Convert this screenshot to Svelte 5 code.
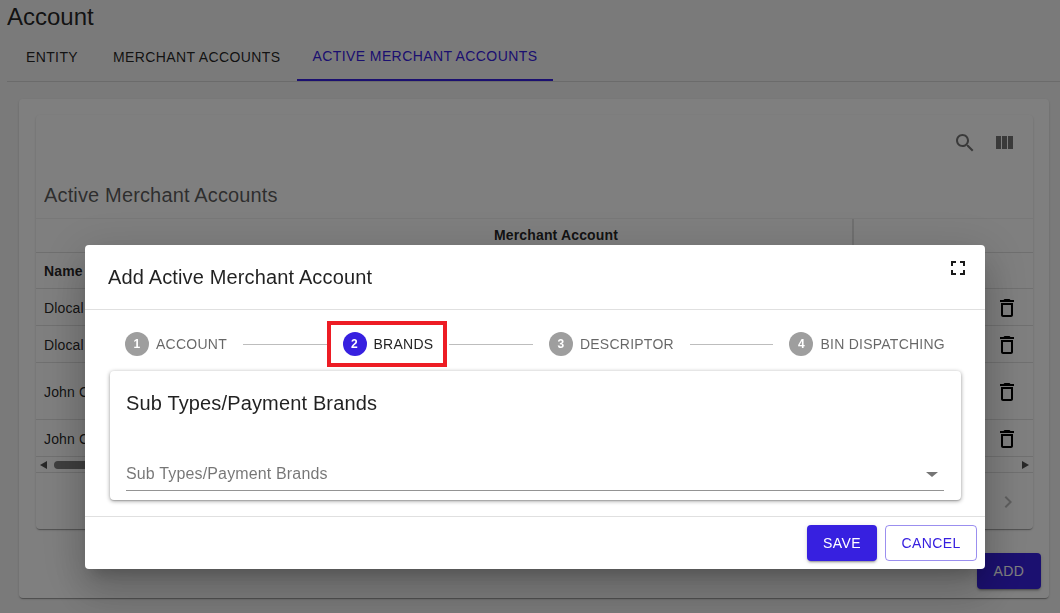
<script>
  const tabs = ['Entity', 'Merchant Accounts', 'Active Merchant Accounts']
  const rows = [
    { name: 'Dlocal', tall: false },
    { name: 'Dlocal', tall: false },
    { name: 'John C', tall: true },
    { name: 'John C', tall: false }
  ]
  const steps = ['Account', 'Brands', 'Descriptor', 'BIN Dispatching']
  let active = 1
</script>

<main>
  <h1>Account</h1>
  <nav class="tabs">
    {#each tabs as tab, i}
      <button class="tab" class:selected={i === 2}>{tab}</button>
    {/each}
  </nav>

  <section class="outer">
    <div class="inner">
      <div class="toolbar">
        <svg viewBox="0 0 24 24"><path d="M15.5 14h-.79l-.28-.27C15.41 12.59 16 11.11 16 9.5 16 5.91 13.09 3 9.5 3S3 5.91 3 9.5 5.91 16 9.5 16c1.61 0 3.09-.59 4.23-1.57l.27.28v.79l5 4.99L20.49 19l-4.99-5zm-6 0C7.01 14 5 11.99 5 9.5S7.01 5 9.5 5 14 7.01 14 9.5 11.99 14 9.5 14z" /></svg>
        <svg viewBox="0 0 24 24"><path d="M10 18h5V5h-5v13zm-6 0h5V5H4v13zM16 5v13h5V5h-5z" /></svg>
      </div>
      <h2>Active Merchant Accounts</h2>

      <div class="group-head">
        <div class="group-cell">Merchant Account</div>
      </div>
      <div class="row head"><span>Name</span></div>
      {#each rows as row}
        <div class="row" class:tall={row.tall}>
          <span>{row.name}</span>
          <svg class="trash" viewBox="0 0 24 24"><path d="M6 19c0 1.1.9 2 2 2h8c1.1 0 2-.9 2-2V7H6v12zM8 9h8v10H8V9zm7.5-5l-1-1h-5l-1 1H5v2h14V4z" /></svg>
        </div>
      {/each}
      <div class="scrollbar">
        <i class="arrow left"></i>
        <div class="track"><div class="thumb"></div></div>
        <i class="arrow right"></i>
      </div>
      <div class="pager">
        <svg viewBox="0 0 24 24"><path d="M10 6L8.59 7.41 13.17 12l-4.58 4.59L10 18l6-6z" /></svg>
      </div>
    </div>
    <div class="add-row"><button class="add">Add</button></div>
  </section>
</main>

<div class="backdrop">
  <div class="dialog">
    <header>
      <h3>Add Active Merchant Account</h3>
      <svg class="fullscreen" viewBox="0 0 24 24"><path d="M7 14H5v5h5v-2H7v-3zm-2-4h2V7h3V5H5v5zm12 7h-3v2h5v-5h-2v3zM14 5v2h3v3h2V5h-5z" /></svg>
    </header>

    <div class="content">
      <div class="stepper">
        {#each steps as step, i}
          {#if i > 0}<div class="connector"></div>{/if}
          <div class="step" class:current={i === active}>
            <span class="num">{i + 1}</span>
            <span class="label">{step}</span>
          </div>
        {/each}
      </div>

      <div class="panel">
        <h4>Sub Types/Payment Brands</h4>
        <div class="select">
          <span>Sub Types/Payment Brands</span>
          <i class="caret"></i>
        </div>
      </div>
    </div>

    <footer>
      <button class="save">Save</button>
      <button class="cancel">Cancel</button>
    </footer>
  </div>
</div>

<style>
  :global(body) {
    margin: 0;
    background: #f5f5f5;
    font-family: 'Liberation Sans', Arial, sans-serif;
    color: rgba(0, 0, 0, 0.87);
    overflow: hidden;
  }

  main {
    height: 613px;
    padding-left: 7px;
    box-sizing: border-box;
  }

  h1 {
    margin: 0;
    padding-top: 3px;
    font-size: 24px;
    font-weight: 400;
    line-height: 28px;
    height: 30px;
  }

  button {
    font-family: inherit;
    text-transform: uppercase;
    border: 0;
    background: none;
    cursor: pointer;
    font-size: 14px;
    letter-spacing: 0.4px;
  }

  .tabs {
    display: flex;
    height: 48px;
    border-bottom: 1px solid rgba(0, 0, 0, 0.12);
  }

  .tab {
    min-width: 90px;
    padding: 0 16px;
    height: 48px;
    color: rgba(0, 0, 0, 0.87);
  }

  .tab.selected {
    color: #3720e0;
    border-bottom: 2px solid #3720e0;
  }

  .outer {
    margin: 17px 11px 0 12px;
    height: 499px;
    padding: 16px 16px 0 17px;
    box-sizing: border-box;
    border-radius: 4px;
    background: #fff;
    box-shadow: 0 2px 1px -1px rgba(0, 0, 0, 0.2), 0 1px 1px rgba(0, 0, 0, 0.14), 0 1px 3px rgba(0, 0, 0, 0.12);
  }

  .inner {
    height: 414px;
    border-radius: 4px;
    background: #fff;
    box-shadow: 0 2px 1px -1px rgba(0, 0, 0, 0.2), 0 1px 1px rgba(0, 0, 0, 0.14), 0 1px 3px rgba(0, 0, 0, 0.12);
  }

  .toolbar {
    display: flex;
    justify-content: flex-end;
    gap: 15px;
    height: 64px;
    padding: 16px 17px 0 0;
    box-sizing: border-box;
  }

  .toolbar svg {
    width: 24px;
    height: 24px;
    fill: rgba(0, 0, 0, 0.54);
  }

  h2 {
    margin: 0;
    padding-left: 8px;
    height: 39px;
    font-size: 20px;
    font-weight: 400;
    line-height: 32px;
    letter-spacing: 0.15px;
    color: rgba(0, 0, 0, 0.87);
    opacity: 0.75;
  }

  .group-head {
    height: 35px;
    border-top: 1px solid rgba(0, 0, 0, 0.06);
    border-bottom: 1px solid rgba(0, 0, 0, 0.12);
    box-sizing: border-box;
    padding-left: 224px;
    padding-right: 179px;
  }

  .group-cell {
    height: 100%;
    border-right: 2px solid rgba(0, 0, 0, 0.12);
    text-align: center;
    font-size: 14px;
    font-weight: 700;
    letter-spacing: 0.15px;
    line-height: 33px;
  }

  .row {
    display: flex;
    align-items: center;
    justify-content: space-between;
    height: 37px;
    padding: 1px 14px 0 8px;
    box-sizing: border-box;
    border-bottom: 1px solid rgba(0, 0, 0, 0.12);
    font-size: 14px;
    letter-spacing: 0.15px;
    color: rgba(0, 0, 0, 0.87);
  }

  .row.head {
    height: 36px;
    font-weight: 700;
  }

  .row.tall {
    height: 57px;
  }

  .trash {
    width: 24px;
    height: 24px;
    fill: #000;
  }

  .scrollbar {
    display: flex;
    align-items: center;
    height: 16px;
    padding: 0 4px;
    box-sizing: border-box;
    border-bottom: 1px solid rgba(0, 0, 0, 0.12);
  }

  .arrow {
    width: 0;
    height: 0;
    border-top: 4px solid transparent;
    border-bottom: 4px solid transparent;
  }

  .arrow.left {
    border-right: 7px solid #505050;
  }

  .arrow.right {
    border-left: 7px solid #505050;
  }

  .track {
    flex: 1;
    padding: 0 7px;
  }

  .thumb {
    width: 300px;
    height: 8px;
    border-radius: 4px;
    background: #7e7e7e;
  }

  .pager {
    display: flex;
    justify-content: flex-end;
    padding: 17px 13px 0 0;
  }

  .pager svg {
    width: 24px;
    height: 24px;
    fill: rgba(0, 0, 0, 0.26);
  }

  .add-row {
    display: flex;
    justify-content: flex-end;
    margin-top: 24px;
    margin-right: -8px;
  }

  .add {
    width: 64px;
    height: 36px;
    border-radius: 4px;
    color: #fff;
    background: #3720e0;
    box-shadow: 0 3px 1px -2px rgba(0, 0, 0, 0.2), 0 2px 2px rgba(0, 0, 0, 0.14), 0 1px 5px rgba(0, 0, 0, 0.12);
  }

  .backdrop {
    position: fixed;
    inset: 0;
    padding: 245px 0 0 85px;
    background: rgba(0, 0, 0, 0.5);
  }

  .dialog {
    width: 900px;
    height: 324px;
    display: flex;
    flex-direction: column;
    border-radius: 4px;
    background: #fff;
    box-shadow: 0 11px 15px -7px rgba(0, 0, 0, 0.2), 0 24px 38px 3px rgba(0, 0, 0, 0.14), 0 9px 46px 8px rgba(0, 0, 0, 0.12);
  }

  header {
    position: relative;
    height: 65px;
    padding: 0 23px;
    box-sizing: border-box;
    border-bottom: 1px solid rgba(0, 0, 0, 0.12);
  }

  h3 {
    margin: 0;
    font-size: 20px;
    font-weight: 400;
    letter-spacing: 0.15px;
    line-height: 64px;
  }

  .fullscreen {
    position: absolute;
    top: 11px;
    right: 15px;
    width: 24px;
    height: 24px;
    fill: #1a1a1a;
  }

  .content {
    height: 207px;
    padding: 0 24px;
    box-sizing: border-box;
    border-bottom: 1px solid rgba(0, 0, 0, 0.12);
  }

  .stepper {
    display: flex;
    align-items: center;
    height: 61px;
    padding-top: 7px;
    box-sizing: border-box;
  }

  .step {
    position: relative;
    display: flex;
    align-items: center;
    gap: 7px;
    padding: 0 16px;
    font-size: 14px;
    letter-spacing: 0.25px;
    text-transform: uppercase;
    color: rgba(0, 0, 0, 0.6);
  }

  .step.current {
    color: rgba(0, 0, 0, 0.87);
  }

  .step.current::after {
    content: '';
    position: absolute;
    left: 0;
    right: 2px;
    top: -11px;
    bottom: -11px;
    border: 4.5px solid #ed1c24;
  }

  .num {
    display: flex;
    align-items: center;
    justify-content: center;
    width: 24px;
    height: 24px;
    border-radius: 50%;
    font-size: 12px;
    font-weight: 700;
    color: #fff;
    background: #9e9e9e;
  }

  .current .num {
    background: #3720e0;
  }

  .connector {
    flex: 1;
    height: 1px;
    background: #bdbdbd;
  }

  .panel {
    margin-left: 1px;
    height: 129px;
    width: 851px;
    padding: 0 17px 0 16px;
    box-sizing: border-box;
    border-radius: 4px;
    background: #fff;
    box-shadow: 0 1px 4px rgba(0, 0, 0, 0.4), 0 1px 1px rgba(0, 0, 0, 0.14);
  }

  h4 {
    margin: 0;
    padding-top: 17px;
    height: 78px;
    box-sizing: border-box;
    font-size: 20px;
    font-weight: 400;
    letter-spacing: 0.15px;
    line-height: 30px;
  }

  .select {
    display: flex;
    align-items: center;
    justify-content: space-between;
    height: 42px;
    padding: 9px 6px 0 0;
    box-sizing: border-box;
    border-bottom: 1px solid rgba(0, 0, 0, 0.42);
    font-size: 16px;
    letter-spacing: 0.15px;
    color: rgba(0, 0, 0, 0.54);
  }

  .caret {
    width: 0;
    height: 0;
    border-left: 6px solid transparent;
    border-right: 6px solid transparent;
    border-top: 5px solid rgba(0, 0, 0, 0.54);
  }

  footer {
    display: flex;
    justify-content: flex-end;
    gap: 8px;
    padding: 8px 8px 0 0;
  }

  footer button {
    height: 36px;
    border-radius: 4px;
  }

  .save {
    width: 70px;
    color: #fff;
    background: #3720e0;
    box-shadow: 0 3px 1px -2px rgba(0, 0, 0, 0.2), 0 2px 2px rgba(0, 0, 0, 0.14), 0 1px 5px rgba(0, 0, 0, 0.12);
  }

  .cancel {
    width: 92px;
    color: #3720e0;
    border: 1px solid rgba(55, 32, 224, 0.5);
  }
</style>
